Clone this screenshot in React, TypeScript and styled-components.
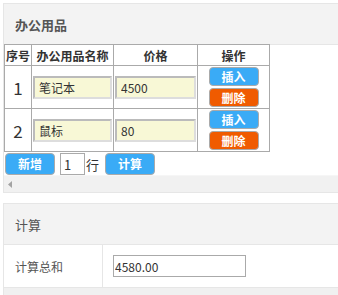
import React from 'react'
import styled, { createGlobalStyle } from 'styled-components'

const GlobalStyle = createGlobalStyle`
  html, body {
    margin: 0;
    padding: 0;
    background: #fff;
    font-family: "Noto Sans CJK SC", "Liberation Sans", sans-serif;
    color: #333;
    overflow: hidden;
  }
`

const Page = styled.div`
  padding: 3px 0 0 3px;
`

const Panel = styled.section<{ $gap?: number }>`
  border: 1px solid #e6e6e6;
  border-right: none;
  margin-top: ${(p) => p.$gap || 0}px;
`

const PanelHeader = styled.div<{ $bold?: boolean }>`
  height: 40px;
  background: #f3f3f3;
  border-bottom: 1px solid #e6e6e6;
  display: flex;
  align-items: center;
  padding-left: 11px;
  font-size: 13px;
  font-weight: ${(p) => (p.$bold ? 'bold' : 'normal')};
  color: #555;
`

const GridTable = styled.table`
  border-collapse: collapse;
  font-size: 12px;
  margin-top: -1px;
  td,
  th {
    border: 1px solid #aaa;
    padding: 0;
  }
`

const HeadCell = styled.th<{ $w: number }>`
  width: ${(p) => p.$w}px;
  height: 20px;
  font-weight: bold;
  color: #333;
  text-align: center;
`

const IndexCell = styled.td`
  height: 42px;
  text-align: center;
  font-size: 17px;
  color: #333;
`

const FieldCell = styled.td`
  vertical-align: middle;
`

const FieldInput = styled.input`
  box-sizing: border-box;
  display: block;
  width: calc(100% - 2px);
  height: 23px;
  margin: 1px 0 0 1px;
  border: 2px solid #bbb;
  border-right-color: #ddd;
  border-bottom-color: #ddd;
  background: #f8f8d6;
  padding: 0 4px;
  font-family: inherit;
  font-size: 12px;
  color: #333;
  outline: none;
`

const ActionCell = styled.td`
  text-align: center;
`

const ActionStack = styled.div`
  display: flex;
  flex-direction: column;
  align-items: center;
  gap: 2px;
`

const Btn = styled.button<{ $tone: 'blue' | 'orange'; $w?: number; $h?: number }>`
  box-sizing: border-box;
  width: ${(p) => p.$w || 50}px;
  height: ${(p) => p.$h || 19}px;
  padding: 0;
  border: 1px solid #aaa;
  border-radius: 4px;
  background: ${(p) => (p.$tone === 'blue' ? '#3aabf6' : '#f05b00')};
  color: #fff;
  font-family: inherit;
  font-size: 12px;
  font-weight: bold;
  line-height: 1;
`

const Toolbar = styled.div`
  display: flex;
  align-items: center;
  padding: 1px 0 0 1px;
  height: 22px;
`

const CountInput = styled.input`
  box-sizing: border-box;
  width: 25px;
  height: 22px;
  margin-left: 5px;
  border: 1px solid #aaa;
  padding: 0 3px;
  font-family: inherit;
  font-size: 13px;
  color: #333;
`

const RowLabel = styled.span`
  font-size: 13px;
  margin: 0 6px 0 1px;
`

const ScrollTrack = styled.div`
  height: 16px;
  background: #f1f1f1;
  border-top: 1px solid #f6f6f6;
  display: flex;
  align-items: center;
  padding-left: 4px;
  svg {
    display: block;
  }
`

const FormRow = styled.div`
  display: flex;
  height: 42px;
  border-bottom: 1px solid #e6e6e6;
`

const LabelCell = styled.div`
  width: 99px;
  border-right: 1px solid #e6e6e6;
  display: flex;
  align-items: center;
  padding-left: 11px;
  box-sizing: border-box;
  font-size: 12px;
  color: #555;
`

const ValueCell = styled.div`
  display: flex;
  align-items: center;
  padding-left: 10px;
`

const SumInput = styled.input`
  box-sizing: border-box;
  width: 133px;
  height: 22px;
  border: 1px solid #aaa;
  padding: 0 1px;
  font-family: inherit;
  font-size: 12px;
  color: #333;
`

const Footer = styled.div`
  height: 10px;
  background: #f0f0f0;
`

const rows = [
  { name: '笔记本', price: '4500' },
  { name: '鼠标', price: '80' },
]

export default function App() {
  return (
    <Page>
      <GlobalStyle />
      <Panel>
        <PanelHeader $bold>办公用品</PanelHeader>
        <GridTable>
          <thead>
            <tr>
              <HeadCell $w={26}>序号</HeadCell>
              <HeadCell $w={81}>办公用品名称</HeadCell>
              <HeadCell $w={83}>价格</HeadCell>
              <HeadCell $w={71}>操作</HeadCell>
            </tr>
          </thead>
          <tbody>
            {rows.map((r, i) => (
              <tr key={i}>
                <IndexCell>{i + 1}</IndexCell>
                <FieldCell>
                  <FieldInput defaultValue={r.name} />
                </FieldCell>
                <FieldCell>
                  <FieldInput defaultValue={r.price} />
                </FieldCell>
                <ActionCell>
                  <ActionStack>
                    <Btn $tone="blue">插入</Btn>
                    <Btn $tone="orange">删除</Btn>
                  </ActionStack>
                </ActionCell>
              </tr>
            ))}
          </tbody>
        </GridTable>
        <Toolbar>
          <Btn $tone="blue" $h={22}>新增</Btn>
          <CountInput defaultValue="1" />
          <RowLabel>行</RowLabel>
          <Btn $tone="blue" $h={22}>计算</Btn>
        </Toolbar>
        <ScrollTrack>
          <svg width="5" height="7" viewBox="0 0 5 7">
            <path d="M4 0 L0 3.5 L4 7 Z" fill="#a3a3a3" />
          </svg>
        </ScrollTrack>
      </Panel>
      <Panel $gap={10}>
        <PanelHeader>计算</PanelHeader>
        <FormRow>
          <LabelCell>计算总和</LabelCell>
          <ValueCell>
            <SumInput defaultValue="4580.00" />
          </ValueCell>
        </FormRow>
        <Footer />
      </Panel>
    </Page>
  )
}
